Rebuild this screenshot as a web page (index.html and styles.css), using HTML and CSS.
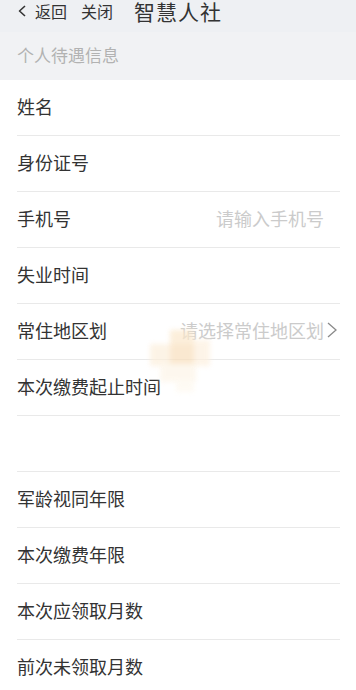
FILE: index.html
```html
<!DOCTYPE html>
<html lang="zh-CN">
<head>
<meta charset="utf-8">
<title>智慧人社</title>
<link rel="stylesheet" href="styles.css">
</head>
<body>
<div class="page">
  <header class="topbar">
    <svg class="back-icon" width="10" height="12" viewBox="0 0 10 12"><path d="M8 1 L2.5 6 L8 11" fill="none" stroke="#333" stroke-width="1.6" stroke-linejoin="round"/></svg>
    <span class="nav-link">返回</span>
    <span class="nav-link close">关闭</span>
    <span class="title">智慧人社</span>
  </header>
  <div class="section-title">个人待遇信息</div>
  <ul class="form">
    <li class="row"><span class="label">姓名</span></li>
    <li class="row"><span class="label">身份证号</span></li>
    <li class="row"><span class="label">手机号</span><span class="value">请输入手机号</span></li>
    <li class="row"><span class="label">失业时间</span></li>
    <li class="row"><span class="label">常住地区划</span><span class="value select">请选择常住地区划</span><svg class="arrow" width="16" height="18" viewBox="0 0 16 18"><path d="M4 2 L12 9 L4 16" fill="none" stroke="#8a8a8a" stroke-width="1.3"/></svg></li>
    <li class="row"><span class="label">本次缴费起止时间</span></li>
    <li class="row"><span class="label"></span></li>
    <li class="row"><span class="label">军龄视同年限</span></li>
    <li class="row"><span class="label">本次缴费年限</span></li>
    <li class="row"><span class="label">本次应领取月数</span></li>
    <li class="row"><span class="label">前次未领取月数</span></li>
  </ul>
  <div class="mosaic">
    <i class="m1"></i><i class="m2"></i><i class="m3"></i><i class="m4"></i><i class="m5"></i><i class="m6"></i>
  </div>
</div>
</body>
</html>
```
FILE: styles.css
```css
html, body {
  margin: 0;
  padding: 0;
  background: #ffffff;
}
body {
  font-family: "Noto Sans CJK SC", "Noto Sans", sans-serif;
  color: #333333;
  overflow: hidden;
}
.page {
  position: relative;
  width: 356px;
  height: 690px;
  overflow: hidden;
}
.topbar {
  height: 32px;
  background: #eef0f3;
  display: flex;
  align-items: flex-start;
  padding-left: 17px;
  padding-top: 1px;
  box-sizing: border-box;
}
.back-icon {
  margin-top: 4px;
  width: 10px;
  height: 12px;
}
.nav-link {
  font-size: 16px;
  line-height: 20px;
  margin-left: 8px;
  color: #333;
}
.nav-link.close {
  margin-left: 14px;
}
.title {
  font-size: 21px;
  line-height: 21px;
  margin-left: 21px;
  color: #333;
  letter-spacing: 1px;
}
.section-title {
  height: 48px;
  background: #f1f2f4;
  font-size: 17px;
  line-height: 46px;
  color: #b2b2b2;
  padding-left: 17px;
}
.form {
  list-style: none;
  margin: 0;
  padding: 0;
  background: #fff;
}
.row {
  height: 55px;
  box-sizing: border-box;
  padding-bottom: 3px;
  margin-left: 17px;
  margin-right: 16px;
  border-bottom: 1px solid #e9e9e9;
  display: flex;
  align-items: center;
  font-size: 18px;
}
.row {
  height: 56px;
}
.label {
  flex: 1;
  color: #333;
}
.value {
  color: #cbcbcb;
  margin-right: 16px;
}
.value.select {
  margin-right: 0;
}
.arrow {
  width: 16px;
  height: 18px;
}
.mosaic {
  position: absolute;
  left: 146px;
  top: 330px;
  width: 76px;
  height: 66px;
  filter: blur(2.5px);
  opacity: 0.7;
}
.mosaic i {
  position: absolute;
  display: block;
}
.m1 { left: 24px; top: 0; width: 24px; height: 16px; background: #fbe8cc; }
.m2 { left: 4px; top: 14px; width: 22px; height: 22px; background: #fcefdc; }
.m3 { left: 24px; top: 14px; width: 26px; height: 22px; background: #f9dfbd; }
.m4 { left: 48px; top: 10px; width: 16px; height: 26px; background: #fdf0df; }
.m5 { left: 14px; top: 34px; width: 36px; height: 18px; background: #fdf5e8; }
.m6 { left: 30px; top: 50px; width: 18px; height: 12px; background: #fef9ef; }
```
